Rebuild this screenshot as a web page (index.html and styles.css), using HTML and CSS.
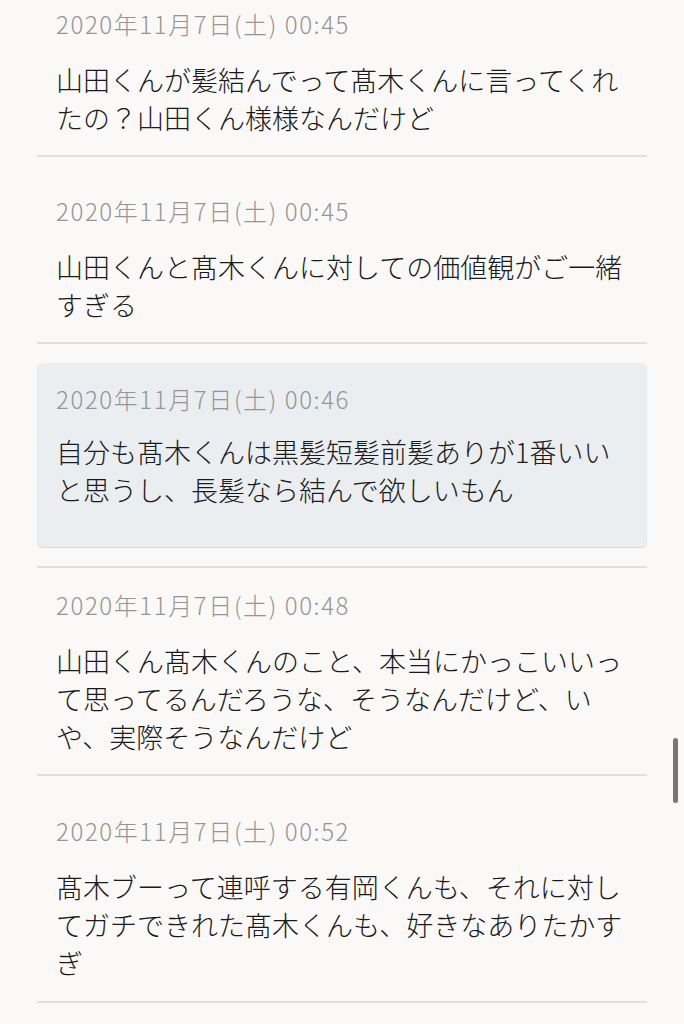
FILE: index.html
```html
<!DOCTYPE html>
<html lang="ja">
<head>
<meta charset="utf-8">
<title>コメント</title>
<link rel="stylesheet" href="styles.css">
</head>
<body>
<main class="list">
  <article class="entry entry--first">
    <div class="date">2020年11月7日(土) 00:45</div>
    <p class="text">山田くんが髪結んでって髙木くんに言ってくれたの？山田くん様様なんだけど</p>
  </article>
  <article class="entry">
    <div class="date">2020年11月7日(土) 00:45</div>
    <p class="text">山田くんと髙木くんに対しての価値観がご一緒すぎる</p>
  </article>
  <article class="entry entry--highlight">
    <div class="card">
      <div class="date">2020年11月7日(土) 00:46</div>
      <p class="text">自分も髙木くんは黒髪短髪前髪ありが1番いいと思うし、長髪なら結んで欲しいもん</p>
    </div>
  </article>
  <article class="entry">
    <div class="date">2020年11月7日(土) 00:48</div>
    <p class="text">山田くん髙木くんのこと、本当にかっこいいって思ってるんだろうな、そうなんだけど、いや、実際そうなんだけど</p>
  </article>
  <article class="entry entry--last">
    <div class="date">2020年11月7日(土) 00:52</div>
    <p class="text">髙木ブーって連呼する有岡くんも、それに対してガチできれた髙木くんも、好きなありたかすぎ</p>
  </article>
</main>
<div class="scrollbar"></div>
</body>
</html>
```

FILE: styles.css
```css
html, body {
  margin: 0;
  padding: 0;
  background: #fbf9f8;
}

body {
  font-family: "Noto Sans CJK JP", "Noto Sans", sans-serif;
  color: #1a1a1a;
  height: 1024px;
  overflow: hidden;
}

.list {
  width: 610px;
  margin-left: 37px;
}

.entry {
  padding: 39px 19px 18px;
  border-bottom: 2px solid #e1dfdf;
}

.entry--first {
  padding-top: 9px;
}

.entry--last {
  padding-top: 40px;
  padding-bottom: 19px;
}

.entry--highlight {
  padding: 19px 0 19px;
}

.entry--highlight + .entry {
  padding-top: 22px;
}

.card {
  background: #eaeef1;
  border-radius: 6px;
  padding: 21px 19px 38px;
  box-shadow: 0 1px 1px rgba(0, 0, 0, 0.13);
}

.date {
  font-size: 24px;
  line-height: 30px;
  font-weight: 300;
  color: #959595;
  letter-spacing: 1.6px;
  white-space: nowrap;
}

.text {
  margin: 22px 0 0;
  font-size: 27px;
  line-height: 38px;
  font-weight: 300;
  color: #1a1a1a;
}

.card .text {
  margin-top: 19px;
}

.scrollbar {
  position: absolute;
  left: 673px;
  top: 738px;
  width: 5px;
  height: 65px;
  border-radius: 3px;
  background: #767676;
}
```
